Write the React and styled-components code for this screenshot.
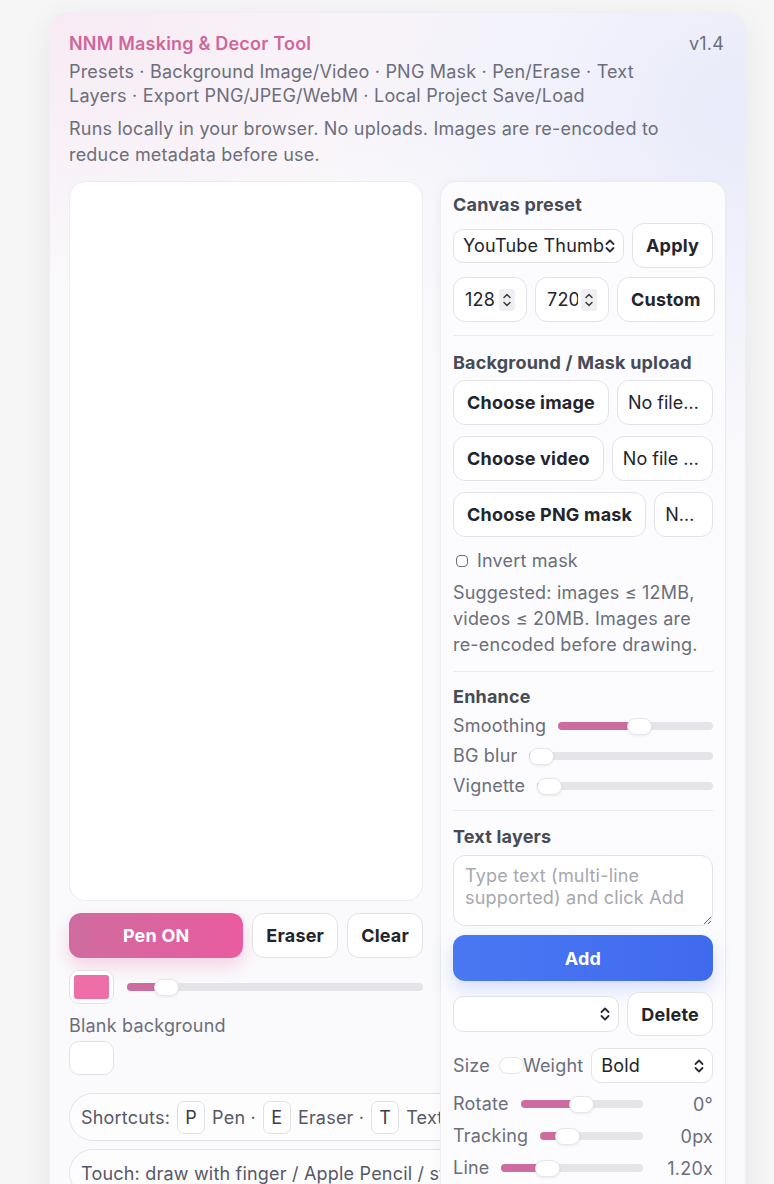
import React from 'react';
import styled, { createGlobalStyle } from 'styled-components';

const GlobalStyle = createGlobalStyle`
  * { box-sizing: border-box; }
  body {
    margin: 0;
    padding: 12px 28px 0 49px;
    background: #f6f6f7;
    font-family: Inter, "Noto Sans", sans-serif;
    letter-spacing: 0.2px;
    color: #23252e;
    overflow: hidden;
  }
`;

const Card = styled.div`
  width: 697px;
  border-radius: 18px;
  border: 1px solid #f0eef4;
  padding: 20px 20px 40px 19px;
  background:
    radial-gradient(700px 420px at 0% 0%, rgba(232, 150, 200, 0.16), transparent 70%),
    radial-gradient(600px 520px at 100% 8%, rgba(130, 140, 240, 0.14), transparent 70%),
    #fafafc;
  box-shadow: 0 8px 30px rgba(0, 0, 0, 0.07);
`;

const Header = styled.header`
  display: flex;
  justify-content: space-between;
  align-items: flex-start;
  gap: 16px;
`;

const HeaderText = styled.div`
  flex: 1;
  min-width: 0;
`;

const Title = styled.div`
  color: #d0669a;
  font-size: 18px;
  font-weight: 600;
  line-height: 22px;
`;

const Version = styled.div`
  flex: none;
  color: #6b6e7b;
  font-size: 18px;
  line-height: 22px;
  padding-right: 1px;
`;

const Sub = styled.p`
  margin: ${p => p.$top || 4}px 0 0;
  color: #6b6e7b;
  font-size: 18px;
  line-height: ${p => p.$lh || 24}px;
`;

const Body = styled.div`
  display: grid;
  grid-template-columns: 354px 286px;
  gap: 17px;
  margin-top: 13px;
  align-items: start;
`;

const LeftCol = styled.div`
  display: flex;
  flex-direction: column;
  min-width: 0;
`;

const Canvas = styled.div`
  height: 720px;
  background: #fff;
  border: 1px solid #ebebf0;
  border-radius: 16px;
`;

const ToolRow = styled.div`
  display: flex;
  gap: 9px;
  margin-top: 12px;
`;

const Button = styled.button`
  height: ${p => p.$h || 45}px;
  padding: 0 13px;
  border: 1.5px solid #e2e2e8;
  border-radius: 12px;
  background: #fff;
  color: #23252e;
  font-family: inherit;
  letter-spacing: inherit;
  font-size: 18px;
  font-weight: 700;
  white-space: nowrap;
  flex: none;
`;

const PenButton = styled(Button)`
  flex: 1;
  border: none;
  color: #fff;
  background: linear-gradient(90deg, #cf6c9f, #e95c9f);
  box-shadow: 0 8px 18px rgba(233, 92, 159, 0.25);
`;

const AddButton = styled(Button)`
  width: 100%;
  border: none;
  color: #fff;
  background: linear-gradient(90deg, #4a78f3, #3f6aee);
  box-shadow: 0 8px 18px rgba(70, 110, 240, 0.22);
`;

const ColorRow = styled.div`
  display: flex;
  align-items: center;
  gap: 13px;
  margin-top: 12px;
`;

const Swatch = styled.div`
  width: 45px;
  height: 34px;
  flex: none;
  border: 1.5px solid #e2e2e8;
  border-radius: 10px;
  background: #fff;
  padding: 4px;
  display: flex;
`;

const SwatchFill = styled.div`
  flex: 1;
  border-radius: 3px;
  background: ${p => p.$color};
`;

const Label = styled.div`
  color: #6b6e7b;
  font-size: 18px;
  line-height: 24px;
  white-space: nowrap;
  flex: none;
`;

const BlankLabel = styled(Label)`
  margin-top: 10px;
`;

const BlankSwatch = styled(Swatch)`
  margin-top: 3px;
`;

const Pill = styled.div`
  display: flex;
  align-items: center;
  width: max-content;
  height: 48px;
  margin-top: ${p => p.$top}px;
  padding: 0 11px;
  border: 1.5px solid #e2e2e8;
  border-radius: 24px;
  background: #fdfdfe;
  color: #555866;
  font-size: 18px;
  white-space: nowrap;
`;

const Kbd = styled.span`
  display: inline-flex;
  align-items: center;
  justify-content: center;
  width: 28px;
  height: 33px;
  margin: 0 7px;
  border: 1.5px solid #e0e0e6;
  border-radius: 7px;
  background: #fff;
  color: #3a3c47;
`;

const Panel = styled.div`
  position: relative;
  z-index: 1;
  background: #fcfcfe;
  border: 1px solid #ebebf0;
  border-radius: 16px;
  padding: 11px 12px 20px;
  box-shadow: -2px 0 10px rgba(0, 0, 0, 0.03);
  display: flex;
  flex-direction: column;
`;

const Heading = styled.div`
  color: #474a57;
  font-size: 18px;
  font-weight: 700;
  line-height: 24px;
`;

const Row = styled.div`
  display: flex;
  align-items: center;
  gap: 8px;
  margin-top: ${p => p.$top || 0}px;
`;

const Divider = styled.hr`
  width: 100%;
  border: none;
  border-top: 1.5px solid #ebebef;
  margin: ${p => p.$top}px 0 ${p => p.$bottom}px;
`;

const SelectBox = styled.div`
  display: flex;
  align-items: center;
  height: ${p => p.$h || 34}px;
  flex: 1;
  min-width: 0;
  padding: 0 7px 0 9px;
  border: 1.5px solid #e2e2e8;
  border-radius: 10px;
  background: #fff;
  color: #23252e;
  font-size: 18px;
`;

const SelectText = styled.span`
  flex: 1;
  min-width: 0;
  overflow: hidden;
  white-space: nowrap;
`;

const NumberBox = styled.div`
  display: flex;
  align-items: center;
  gap: 3px;
  width: 74px;
  height: 45px;
  flex: none;
  padding: 0 10px 0 11px;
  border: 1.5px solid #e2e2e8;
  border-radius: 12px;
  background: #fff;
  font-size: 18px;
  color: #23252e;
`;

const NumberText = styled.span`
  width: 31px;
  overflow: hidden;
  white-space: nowrap;
`;

const Spinner = styled.span`
  display: flex;
  align-items: center;
  justify-content: center;
  width: 16px;
  height: 22px;
  border-radius: 3px;
  background: #f0f0f2;
`;

const FileName = styled.div`
  flex: 1;
  min-width: 0;
  height: 45px;
  display: flex;
  align-items: center;
  padding: 0 10px;
  border: 1.5px solid #e2e2e8;
  border-radius: 12px;
  background: #fff;
  font-size: 18px;
  letter-spacing: 0;
  color: #23252e;
  span {
    overflow: hidden;
    text-overflow: ellipsis;
    white-space: nowrap;
  }
`;

const CheckRow = styled.label`
  display: flex;
  align-items: center;
  gap: 9px;
  margin-top: 12px;
  padding-left: 3px;
  color: #6b6e7b;
  font-size: 18px;
  line-height: 24px;
`;

const CheckBox = styled.span`
  width: 12px;
  height: 12px;
  border: 1.5px solid #6b6e7b;
  border-radius: 4px;
  background: #fff;
`;

const Note = styled.p`
  margin: 7px 0 0;
  color: #6b6e7b;
  font-size: 18px;
  line-height: 26px;
`;

const NoBreak = styled.span`
  white-space: nowrap;
`;

const SliderRow = styled.div`
  display: flex;
  align-items: center;
  gap: 12px;
  height: ${p => p.$h || 30}px;
  margin-top: ${p => p.$top || 0}px;
`;

const Track = styled.div`
  position: relative;
  flex: 1;
  height: 8px;
  border-radius: 4px;
  background: #e5e5e9;
`;

const Fill = styled.div`
  height: 100%;
  border-radius: 4px;
  background: #cd6c9e;
`;

const Thumb = styled.div`
  width: 25px;
  height: 17px;
  border-radius: 9px;
  background: #fff;
  border: 1px solid #e6e6ea;
  box-shadow: 0 1px 3px rgba(0, 0, 0, 0.08);
`;

const TrackThumb = styled(Thumb)`
  position: absolute;
  top: -4.5px;
`;

const Value = styled.div`
  width: 58px;
  flex: none;
  text-align: right;
  color: #6b6e7b;
  font-size: 18px;
`;

const TextArea = styled.textarea`
  display: block;
  width: 100%;
  height: 71px;
  margin-top: 6px;
  padding: 9px 11px;
  border: 1.5px solid #e2e2e8;
  border-radius: 12px;
  background: #fff;
  font-family: inherit;
  letter-spacing: inherit;
  font-size: 18px;
  line-height: 22px;
  color: #23252e;
  &::placeholder {
    color: #a6a8b0;
  }
`;

const SizeThumb = styled(Thumb)`
  flex: none;
  margin: 0 -9px 0 1px;
  box-shadow: none;
`;

const Chevron = () => (
  <svg width="12" height="16" viewBox="0 0 12 16" fill="none" stroke="#2b2d36" strokeWidth="1.8" strokeLinecap="round" strokeLinejoin="round">
    <path d="M2.5 6 L6 2.5 L9.5 6" />
    <path d="M2.5 10 L6 13.5 L9.5 10" />
  </svg>
);

const SmallChevron = () => (
  <svg width="10" height="16" viewBox="0 0 10 16" fill="none" stroke="#3a3c47" strokeWidth="1.5" strokeLinecap="round" strokeLinejoin="round">
    <path d="M2 5.5 L5 2.5 L8 5.5" />
    <path d="M2 10.5 L5 13.5 L8 10.5" />
  </svg>
);

const Slider = ({ value }) => (
  <Track>
    <Fill style={{ width: `calc(${value} * (100% - 25px) + 12px)` }} />
    <TrackThumb style={{ left: `calc(${value} * (100% - 25px))` }} />
  </Track>
);

const FileRow = ({ label, top }) => (
  <Row $top={top}>
    <Button>{label}</Button>
    <FileName>
      <span>No file chosen</span>
    </FileName>
  </Row>
);

export default function App() {
  return (
    <>
      <GlobalStyle />
      <Card>
        <Header>
          <HeaderText>
            <Title>NNM Masking &amp; Decor Tool</Title>
            <Sub $top={5}>
              Presets · Background Image/Video · PNG Mask · Pen/Erase · Text Layers · Export PNG/JPEG/WebM · Local Project Save/Load
            </Sub>
            <Sub $top={8} $lh={26}>
              Runs locally in your browser. No uploads. Images are re-encoded to reduce metadata before use.
            </Sub>
          </HeaderText>
          <Version>v1.4</Version>
        </Header>

        <Body>
          <LeftCol>
            <Canvas />
            <ToolRow>
              <PenButton>Pen ON</PenButton>
              <Button>Eraser</Button>
              <Button>Clear</Button>
            </ToolRow>
            <ColorRow>
              <Swatch>
                <SwatchFill $color="#ee6fa8" />
              </Swatch>
              <Slider value={0.1} />
            </ColorRow>
            <BlankLabel>Blank background</BlankLabel>
            <BlankSwatch>
              <SwatchFill $color="#ffffff" />
            </BlankSwatch>
            <Pill $top={18}>
              Shortcuts:<Kbd>P</Kbd>Pen ·<Kbd>E</Kbd>Eraser ·<Kbd>T</Kbd>Text · <Kbd>Z</Kbd>Undo
            </Pill>
            <Pill $top={8}>Touch: draw with finger / Apple Pencil / stylus</Pill>
          </LeftCol>

          <Panel>
            <Heading>Canvas preset</Heading>
            <Row $top={6}>
              <SelectBox>
                <SelectText>YouTube Thumbnail 1280×720</SelectText>
                <Chevron />
              </SelectBox>
              <Button>Apply</Button>
            </Row>
            <Row $top={9}>
              <NumberBox>
                <NumberText>1280</NumberText>
                <Spinner><SmallChevron /></Spinner>
              </NumberBox>
              <NumberBox>
                <NumberText>720</NumberText>
                <Spinner><SmallChevron /></Spinner>
              </NumberBox>
              <Button style={{ flex: 1 }}>Custom</Button>
            </Row>
            <Divider $top={13} $bottom={15} />

            <Heading>Background / Mask upload</Heading>
            <FileRow label="Choose image" top={5} />
            <FileRow label="Choose video" top={11} />
            <FileRow label="Choose PNG mask" top={11} />
            <CheckRow>
              <CheckBox />
              Invert mask
            </CheckRow>
            <Note>
              Suggested: images ≤ 12MB, videos ≤ 20MB. Images are <NoBreak>re-encoded</NoBreak> before drawing.
            </Note>
            <Divider $top={13} $bottom={13} />

            <Heading>Enhance</Heading>
            <SliderRow $top={2}>
              <Label>Smoothing</Label>
              <Slider value={0.53} />
            </SliderRow>
            <SliderRow>
              <Label>BG blur</Label>
              <Slider value={0} />
            </SliderRow>
            <SliderRow>
              <Label>Vignette</Label>
              <Slider value={0} />
            </SliderRow>
            <Divider $top={9} $bottom={14} />

            <Heading>Text layers</Heading>
            <TextArea placeholder="Type text (multi-line supported) and click Add" />
            <Row $top={9}>
              <AddButton $h={46}>Add</AddButton>
            </Row>
            <Row $top={11}>
              <SelectBox $h={36}>
                <SelectText />
                <Chevron />
              </SelectBox>
              <Button $h={44}>Delete</Button>
            </Row>
            <Row $top={12}>
              <Label>Size</Label>
              <SizeThumb />
              <Label>Weight</Label>
              <SelectBox $h={35}>
                <SelectText>Bold</SelectText>
                <Chevron />
              </SelectBox>
            </Row>
            <SliderRow $h={32} $top={5}>
              <Label>Rotate</Label>
              <Slider value={0.5} />
              <Value>0°</Value>
            </SliderRow>
            <SliderRow $h={32}>
              <Label>Tracking</Label>
              <Slider value={0.19} />
              <Value>0px</Value>
            </SliderRow>
            <SliderRow $h={32}>
              <Label>Line</Label>
              <Slider value={0.29} />
              <Value>1.20x</Value>
            </SliderRow>
          </Panel>
        </Body>
      </Card>
    </>
  );
}
